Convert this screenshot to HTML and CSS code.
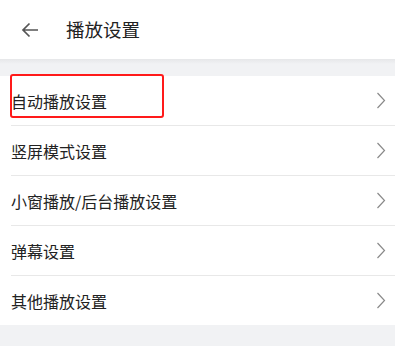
FILE: index.html
```html
<!DOCTYPE html>
<html lang="zh">
<head>
<meta charset="utf-8">
<link rel="stylesheet" href="styles.css">
</head>
<body>
<div class="page">
  <header class="topbar">
    <svg class="back" width="18" height="16" viewBox="0 0 18 16"><path d="M17 8H2M8.5 1.5L2 8l6.5 6.5" fill="none" stroke="#555" stroke-width="1.7"/></svg>
    <span class="title">播放设置</span>
  </header>
  <div class="gap"></div>
  <ul class="list">
    <li class="row"><span class="label">自动播放设置</span><svg class="chev" width="10" height="17" viewBox="0 0 10 17"><path d="M1.5 1l7 7.5-7 7.5" fill="none" stroke="#8a8a8a" stroke-width="1.2"/></svg><span class="highlight"></span></li>
    <li class="row"><span class="label">竖屏模式设置</span><svg class="chev" width="10" height="17" viewBox="0 0 10 17"><path d="M1.5 1l7 7.5-7 7.5" fill="none" stroke="#8a8a8a" stroke-width="1.2"/></svg></li>
    <li class="row"><span class="label">小窗播放/后台播放设置</span><svg class="chev" width="10" height="17" viewBox="0 0 10 17"><path d="M1.5 1l7 7.5-7 7.5" fill="none" stroke="#8a8a8a" stroke-width="1.2"/></svg></li>
    <li class="row"><span class="label">弹幕设置</span><svg class="chev" width="10" height="17" viewBox="0 0 10 17"><path d="M1.5 1l7 7.5-7 7.5" fill="none" stroke="#8a8a8a" stroke-width="1.2"/></svg></li>
    <li class="row"><span class="label">其他播放设置</span><svg class="chev" width="10" height="17" viewBox="0 0 10 17"><path d="M1.5 1l7 7.5-7 7.5" fill="none" stroke="#8a8a8a" stroke-width="1.2"/></svg></li>
  </ul>
</div>
</body>
</html>
```
FILE: styles.css
```css
html, body { margin: 0; padding: 0; }
body {
  width: 395px;
  height: 346px;
  background: #f1f2f4;
  font-family: "Noto Sans CJK SC", "Noto Sans", sans-serif;
  color: #222;
  overflow: hidden;
}
.topbar {
  height: 59px;
  background: #fff;
  display: flex;
  align-items: center;
  padding-left: 21px;
  box-sizing: border-box;
}
.back { display: block; }
.title {
  margin-left: 27px;
  font-size: 18.5px;
  color: #222;
  line-height: 1;
}
.gap {
  height: 17px;
  background: linear-gradient(#e6e7e9, #f1f2f4 5px);
}
.list {
  list-style: none;
  margin: 0;
  padding: 0 0 0 11px;
  background: #fff;
}
.row {
  position: relative;
  height: 50px;
  display: flex;
  align-items: center;
  justify-content: space-between;
  padding-right: 9px;
  border-bottom: 1px solid #e8e8e8;
  box-sizing: border-box;
}
.row:last-child { border-bottom: none; height: 49px; }
.label {
  font-size: 16px;
  color: #222;
  line-height: 1;
}
.chev { display: block; }
.highlight {
  position: absolute;
  left: -1px;
  top: -2px;
  width: 154px;
  height: 44px;
  box-sizing: border-box;
  border: 2px solid #ff1a1a;
  border-radius: 3px;
}
```
